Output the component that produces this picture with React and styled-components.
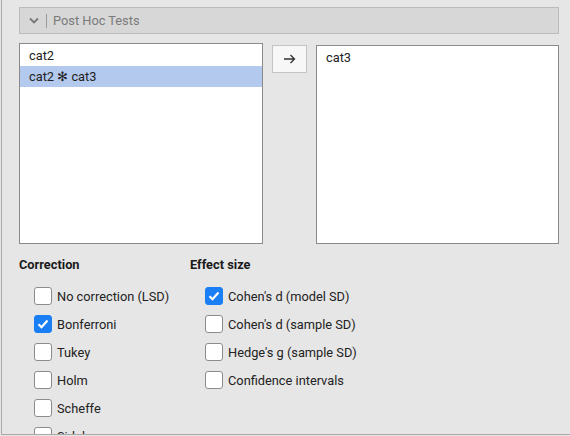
import React from "react";
import styled, { createGlobalStyle } from "styled-components";

const GlobalStyle = createGlobalStyle`
  html, body {
    margin: 0;
    padding: 0;
    background: #e6e6e6;
    overflow: hidden;
  }
  body {
    font-family: Roboto, "Liberation Sans", sans-serif;
    font-size: 12.8px;
    color: #222;
  }
`;

const Panel = styled.div`
  box-sizing: border-box;
  margin-left: 1px;
  height: 435px;
  border-left: 1px solid #a9a9a9;
  border-bottom: 1px solid #a9a9a9;
  padding: 7px 11px 0 17px;
  overflow: hidden;
`;

const Header = styled.div`
  box-sizing: border-box;
  display: flex;
  align-items: center;
  width: 540px;
  height: 27px;
  background: #d7d7d7;
  border: 1px solid #bcbcbc;
  padding-left: 9px;
  color: #7a7a7a;
  font-size: 12.8px;
`;

const Separator = styled.span`
  width: 1px;
  height: 14px;
  background: #9a9a9a;
  margin: 0 6px 0 7px;
`;

const ListRow = styled.div`
  display: flex;
  align-items: flex-start;
  margin-top: 9px;
`;

const ListBox = styled.div`
  box-sizing: border-box;
  width: ${(p) => p.$w}px;
  height: ${(p) => p.$h}px;
  margin-top: ${(p) => p.$top || 0}px;
  background: #fff;
  border: 1px solid #8a8a8a;
  padding-top: ${(p) => p.$pad || 1}px;
`;

const ListItem = styled.div`
  height: 21px;
  line-height: 21px;
  padding-left: 9px;
  background: ${(p) => (p.$selected ? "#b4c9ee" : "transparent")};
`;

const ArrowButton = styled.button`
  box-sizing: border-box;
  width: 35px;
  height: 28px;
  margin: 2px 9px 0 9px;
  background: #f7f7f7;
  border: 1px solid #c4c4c4;
  display: flex;
  align-items: center;
  justify-content: center;
  padding: 0;
  color: #333;
`;

const Options = styled.div`
  display: flex;
  margin-top: 13px;
`;

const Column = styled.div`
  width: ${(p) => p.$w}px;
  display: flex;
  flex-direction: column;
`;

const SectionTitle = styled.div`
  font-weight: 700;
  font-size: 12.8px;
  height: 16px;
  line-height: 16px;
  color: #1a1a1a;
  margin-bottom: 14px;
`;

const CheckRow = styled.label`
  display: flex;
  align-items: center;
  height: 18px;
  margin-bottom: 10px;
  padding-left: 15px;
  font-size: 12.8px;
  color: #222;
`;

const Box = styled.span`
  box-sizing: border-box;
  width: 18px;
  height: 18px;
  border-radius: 3px;
  margin-right: 5px;
  flex: none;
  display: flex;
  align-items: center;
  justify-content: center;
  background: ${(p) => (p.$checked ? "#1a7ef5" : "#fff")};
  border: 1px solid ${(p) => (p.$checked ? "#1a7ef5" : "#8c8c8c")};
`;

const Chevron = () => (
  <svg width="10" height="7" viewBox="0 0 10 7">
    <path d="M1 1.5 L5 5.5 L9 1.5" fill="none" stroke="#777" strokeWidth="1.8" />
  </svg>
);

const Arrow = () => (
  <svg width="13" height="10" viewBox="0 0 13 10">
    <path d="M1 5 H11.5 M7.5 1 L11.5 5 L7.5 9" fill="none" stroke="#333" strokeWidth="1.3" />
  </svg>
);

const Tick = () => (
  <svg width="12" height="10" viewBox="0 0 12 10">
    <path d="M1.5 5.2 L4.5 8.2 L10.5 1.5" fill="none" stroke="#fff" strokeWidth="2.2" />
  </svg>
);

const Check = ({ checked, children }) => (
  <CheckRow>
    <Box $checked={checked}>{checked && <Tick />}</Box>
    {children}
  </CheckRow>
);

const correction = [
  ["No correction (LSD)", false],
  ["Bonferroni", true],
  ["Tukey", false],
  ["Holm", false],
  ["Scheffe", false],
  ["Sidak", false],
];

const effect = [
  ["Cohen's d (model SD)", true],
  ["Cohen's d (sample SD)", false],
  ["Hedge's g (sample SD)", false],
  ["Confidence intervals", false],
];

export default function App() {
  return (
    <>
      <GlobalStyle />
      <Panel>
        <Header>
          <Chevron />
          <Separator />
          Post Hoc Tests
        </Header>
        <ListRow>
          <ListBox $w={244} $h={201}>
            <ListItem>cat2</ListItem>
            <ListItem $selected>cat2 ✻ cat3</ListItem>
          </ListBox>
          <ArrowButton>
            <Arrow />
          </ArrowButton>
          <ListBox $w={243} $h={199} $top={2} $pad={1}>
            <ListItem>cat3</ListItem>
          </ListBox>
        </ListRow>
        <Options>
          <Column $w={171}>
            <SectionTitle>Correction</SectionTitle>
            {correction.map(([label, c]) => (
              <Check key={label} checked={c}>
                {label}
              </Check>
            ))}
          </Column>
          <Column $w={200}>
            <SectionTitle>Effect size</SectionTitle>
            {effect.map(([label, c]) => (
              <Check key={label} checked={c}>
                {label}
              </Check>
            ))}
          </Column>
        </Options>
      </Panel>
    </>
  );
}
